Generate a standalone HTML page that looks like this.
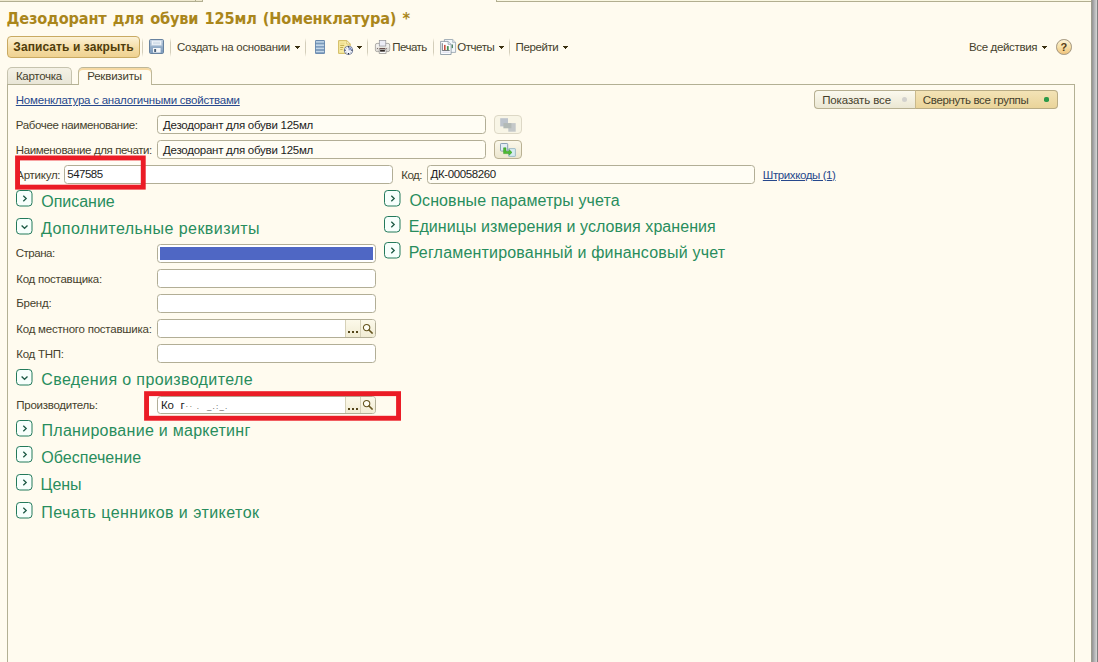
<!DOCTYPE html>
<html lang="ru">
<head>
<meta charset="utf-8">
<title>Дезодорант для обуви 125мл (Номенклатура)</title>
<style>
html,body{margin:0;padding:0;}
body{width:1098px;height:662px;overflow:hidden;position:relative;background:#fffbef;font-family:"Liberation Sans",sans-serif;font-size:11.5px;letter-spacing:-.26px;color:#453f2c;}
.a{position:absolute;white-space:nowrap;}
svg{position:absolute;overflow:visible;}
.t{position:absolute;white-space:nowrap;line-height:14px;height:14px;color:#453f2c;}
#title{letter-spacing:-.15px;word-spacing:1.3px;left:6.5px;top:9px;font-family:"DejaVu Sans Condensed","DejaVu Sans","Liberation Sans",sans-serif;font-weight:bold;font-size:16.15px;line-height:20px;color:#aa861b;}
.sep{position:absolute;width:1px;top:38px;height:19px;background:linear-gradient(rgba(190,184,160,0),rgba(196,190,168,.75) 25%,rgba(196,190,168,.75) 75%,rgba(190,184,160,0));}
.inp{position:absolute;box-sizing:border-box;height:18.5px;border:1px solid #b2ae96;border-radius:3.5px;background:#fff;line-height:16.5px;padding-left:5px;color:#1c1c1c;font-size:11.5px;white-space:nowrap;overflow:hidden;}
.inp.ro{background:#fffdf4;}
.gh{position:absolute;white-space:nowrap;font-size:16px;line-height:20px;color:#288d5d;}
.link{color:#27488c;text-decoration:underline;}
.btn{position:absolute;box-sizing:border-box;top:0;height:17px;background:linear-gradient(#fcf9ea,#f1ecd4);border-left:1px solid #d6d1b8;}
</style>
</head>
<body>

<!-- top strip -->
<div class="a" style="left:0;top:0;width:203px;height:1px;background:#efe9cf;"></div>
<div class="a" style="left:0;top:1px;width:203px;height:1px;background:#b2ae90;"></div>
<div class="a" style="left:195px;top:0;width:1px;height:2px;background:#b2ae90;"></div>
<div class="a" style="left:202px;top:0;width:1px;height:2px;background:#b2ae90;"></div>
<div class="a" style="left:496px;top:0;width:595px;height:1px;background:#faf7e2;"></div>
<div class="a" style="left:496px;top:1px;width:595px;height:1px;background:#b2ae90;"></div>
<div class="a" style="left:496px;top:0;width:1px;height:2px;background:#b2ae90;"></div>
<!-- right bar -->
<div class="a" style="left:1091px;top:0;width:7px;height:662px;background:linear-gradient(90deg,#9d9d8e 0px,#9d9d8e 1px,#999999 1px,#999999 2px,#a6a6a8 2px,#a6a6a8 3px,#b4b5b6 3px,#b4b5b6 4px,#c1c2c2 4px,#c1c2c2 5px,#d0d0d0 5px,#d0d0d0 6px,#808080 6px,#808080 7px);"></div>

<div id="title" class="a">Дезодорант для обуви 125мл (Номенклатура) *</div>

<!-- toolbar -->
<div class="a" style="left:7px;top:36px;width:133px;height:22px;box-sizing:border-box;border:1px solid #c9aa62;border-radius:4px;background:linear-gradient(#fcf2d6,#f5dda6 55%,#efd291);font-weight:bold;font-size:12px;line-height:20px;text-align:center;color:#4f3d0c;letter-spacing:.08px;">Записать и закрыть</div>
<div class="sep" style="left:142px;"></div>
<!-- save icon -->
<svg style="left:149px;top:39px;" width="15" height="15" viewBox="0 0 15 15">
<rect x=".5" y=".5" width="14" height="14" rx="1.2" fill="#98b0cb" stroke="#67829f"/>
<rect x="1" y="1" width="13" height="3.4" fill="#b3c5d9"/><rect x="1" y="4.4" width="13" height="3.2" fill="#a5bad1"/><rect x="1" y="10.8" width="13" height="3.2" fill="#829fbf"/><rect x="1" y="7.6" width="13" height="3.2" fill="#90aac6"/>
<rect x="2.6" y="1.4" width="9.8" height="4.8" fill="#eef3f8" stroke="#c3d1e0" stroke-width=".6"/>
<rect x="4" y="2.8" width="7" height=".8" fill="#c9d6e4"/><rect x="4" y="4.3" width="7" height=".8" fill="#c9d6e4"/>
<rect x="4" y="9" width="7.6" height="4.6" fill="#f4f6f8"/>
<rect x="5.2" y="10" width="1.9" height="3" fill="#4a5f78"/>
</svg>
<div class="sep" style="left:170px;"></div>
<div class="t" style="left:177px;top:40px;letter-spacing:-.32px;">Создать на основании</div>
<svg style="left:295px;top:46px;" width="5" height="3" shape-rendering="crispEdges"><path d="M0 0h5v1h-1v1h-1v1h-1v-1h-1v-1h-1z" fill="#3a3010"/></svg>
<div class="sep" style="left:305px;"></div>
<!-- list icon -->
<svg style="left:315px;top:40px;" width="10" height="14" viewBox="0 0 10 14">
<rect x="0" y="0" width="10" height="14" rx="1.2" fill="#6989ad"/>
<rect x=".9" y="1.1" width="8.2" height="1.7" fill="#c3d7e9"/><rect x=".9" y="4.3" width="8.2" height="1.7" fill="#c3d7e9"/><rect x=".9" y="7.5" width="8.2" height="1.7" fill="#c3d7e9"/><rect x=".9" y="10.7" width="8.2" height="1.7" fill="#c3d7e9"/>
<rect x=".9" y="2.8" width="8.2" height=".8" fill="#86a6c6"/><rect x=".9" y="6" width="8.2" height=".8" fill="#86a6c6"/><rect x=".9" y="9.2" width="8.2" height=".8" fill="#86a6c6"/><rect x=".9" y="12.4" width="8.2" height=".8" fill="#86a6c6"/>
</svg>
<!-- doc clock icon -->
<svg style="left:338px;top:40px;" width="16" height="16" viewBox="0 0 16 16">
<path d="M.6 .6 H8.8 L12.2 4 V13.4 H.6 Z" fill="#f8eba4" stroke="#cdb556" stroke-width=".9"/>
<path d="M8.8 .6 V4 H12.2 Z" fill="#fffbe2" stroke="#cdb556" stroke-width=".7"/>
<rect x="2.2" y="2.8" width="4.4" height=".7" fill="#e3cf7a"/><rect x="2.2" y="4.9" width="4" height=".9" fill="#b9a444"/><rect x="2.2" y="7" width="3" height=".9" fill="#b9a444"/><rect x="2.2" y="9.1" width="2.4" height=".9" fill="#c7b35a"/>
<circle cx="10.5" cy="10.3" r="4.1" fill="#f3f5fb" stroke="#7c88a6" stroke-width="1"/>
<path d="M10.5 10.3 V6.9 A3.4 3.4 0 0 1 13.9 10.3 Z" fill="#93a3d2"/>
<path d="M10.5 6.2 V7.6 M10.5 13 V14.4 M6.4 10.3 H7.8 M13.2 10.3 H14.6" stroke="#23283c" stroke-width="1.1"/>
<path d="M7.7 7.5 L8.3 8.1 M13.3 7.5 L12.7 8.1 M7.7 13.1 L8.3 12.5 M13.3 13.1 L12.7 12.5" stroke="#3a4260" stroke-width=".9"/>
</svg>
<svg style="left:357px;top:46px;" width="5" height="3" shape-rendering="crispEdges"><path d="M0 0h5v1h-1v1h-1v1h-1v-1h-1v-1h-1z" fill="#3a3010"/></svg>
<div class="sep" style="left:367px;"></div>
<!-- printer -->
<svg style="left:375px;top:40px;" width="15" height="14" viewBox="0 0 15 14">
<rect x=".4" y="3.4" width="14.3" height="8.2" rx="1.7" fill="#f2f0ed" stroke="#9b9995" stroke-width=".8"/>
<rect x="1" y="7.6" width="13.1" height="3.5" rx="1" fill="#dedbd6"/>
<rect x="4.3" y=".35" width="6.5" height="5.7" fill="#ececf5" stroke="#929297" stroke-width=".7"/>
<rect x="2" y="8" width=".8" height=".9" fill="#5c4444"/><rect x="4.4" y="8" width="5.8" height=".9" fill="#5a3e3c"/><rect x="10.8" y="8" width=".8" height=".9" fill="#5c4444"/>
<rect x="4.2" y="9.7" width="6.8" height="3.9" fill="#fcfcfc" stroke="#8c8a87" stroke-width=".7"/>
<rect x="5.1" y="10.1" width="4.8" height="1.5" fill="#1b1311"/>
</svg>
<div class="t" style="left:392.3px;top:40px;letter-spacing:-0.530px;">Печать</div>
<div class="sep" style="left:433px;"></div>
<!-- reports -->
<svg style="left:440px;top:39px;" width="16" height="16" viewBox="0 0 16 16">
<path d="M4.4 .5 H12.7 L15.6 3.4 V13.4 H4.4 Z" fill="#f3f7fa" stroke="#919ea9" stroke-width=".8"/>
<path d="M12.7 .5 V3.4 H15.6" fill="#dfe6ec" stroke="#919ea9" stroke-width=".6"/>
<rect x="11.6" y="5.5" width="1.3" height="3.6" fill="#3f7a55"/>
<path d="M.6 2.4 H8.1 L11.1 5.4 V15.5 H.6 Z" fill="#fcfdfe" stroke="#80909d" stroke-width=".8"/>
<path d="M8.1 2.4 V5.4 H11.1" fill="#e4eaef" stroke="#80909d" stroke-width=".6"/>
<path d="M2.3 4.2 V11.5 H9.7" fill="none" stroke="#55595e" stroke-width=".8"/>
<rect x="4" y="5.9" width="1.6" height="5.2" fill="#c9503f"/><rect x="6.9" y="7.1" width="1.8" height="4" fill="#4a8f50"/>
<rect x="2.3" y="12.8" width="7.4" height=".6" fill="#bdbfe0"/>
</svg>
<div class="t" style="left:457.2px;top:40px;letter-spacing:-0.430px;">Отчеты</div>
<svg style="left:499px;top:46px;" width="5" height="3" shape-rendering="crispEdges"><path d="M0 0h5v1h-1v1h-1v1h-1v-1h-1v-1h-1z" fill="#3a3010"/></svg>
<div class="sep" style="left:509px;"></div>
<div class="t" style="left:515.6px;top:40px;letter-spacing:-0.410px;">Перейти</div>
<svg style="left:563px;top:46px;" width="5" height="3" shape-rendering="crispEdges"><path d="M0 0h5v1h-1v1h-1v1h-1v-1h-1v-1h-1z" fill="#3a3010"/></svg>
<div class="t" style="left:968.9px;top:40px;letter-spacing:-0.340px;">Все действия</div>
<svg style="left:1042px;top:46px;" width="5" height="3" shape-rendering="crispEdges"><path d="M0 0h5v1h-1v1h-1v1h-1v-1h-1v-1h-1z" fill="#3a3010"/></svg>
<!-- help -->
<div class="a" style="left:1056.1px;top:39.1px;width:15.7px;height:15.7px;box-sizing:border-box;border:1px solid #a3957c;border-radius:50%;background:linear-gradient(#fcf3d6 0,#f7e2ab 45%,#f1c47e 100%);text-align:center;font-weight:bold;font-size:11px;letter-spacing:0;line-height:15px;color:#553d16;">?</div>

<!-- tabs + panel -->
<div class="a" style="left:7px;top:84px;width:1068px;height:600px;box-sizing:border-box;border:1px solid #b3b094;"></div>
<div class="a" style="left:7px;top:67px;width:65px;height:17px;box-sizing:border-box;border:1px solid #c6c3ae;border-bottom:none;border-radius:5px 5px 0 0;background:linear-gradient(#f4f1e5,#e9e6d7);line-height:16px;padding-left:7.9px;">Карточка</div>
<div class="a" style="left:77.6px;top:66.6px;width:74.8px;height:18.4px;box-sizing:border-box;border:1px solid #bdb798;border-bottom:none;border-radius:5px 5px 0 0;background:#fffbef;box-shadow:inset 0 2px 0 #f6d9a2;line-height:17.6px;padding-left:8.6px;letter-spacing:-0.190px;">Реквизиты</div>

<div class="t link" style="left:15.8px;top:93px;letter-spacing:-.23px;">Номенклатура с аналогичными свойствами</div>

<!-- toggle -->
<div class="a" style="left:814.4px;top:90px;width:101.6px;height:18.8px;box-sizing:border-box;border:1px solid #b7b092;border-right:none;border-radius:4px 0 0 4px;background:linear-gradient(#fbf9ee,#ebe7d3);line-height:18.4px;padding-left:6.8px;letter-spacing:-.12px;">Показать все</div>
<div class="a" style="left:915.4px;top:90px;width:142.2px;height:18.8px;box-sizing:border-box;border:1px solid #b9ac84;border-left:1px solid #c9b98c;border-radius:0 4px 4px 0;background:linear-gradient(#f3e3b6,#ead49a);line-height:18.4px;padding-left:6.4px;letter-spacing:-.33px;">Свернуть все группы</div>
<div class="a" style="left:902px;top:96.9px;width:5px;height:5px;border-radius:50%;background:#d2d1cd;"></div>
<div class="a" style="left:1044px;top:96.9px;width:5px;height:5px;border-radius:1.8px;background:#2c9a48;"></div>

<!-- rows -->
<div class="t" style="left:15.8px;top:117.5px;letter-spacing:-0.360px;">Рабочее наименование:</div>
<div class="inp ro" style="left:157px;top:115.2px;width:329px;line-height:18px;">Дезодорант для обуви 125мл</div>
<div class="t" style="left:15.8px;top:142.5px;letter-spacing:-0.370px;">Наименование для печати:</div>
<div class="inp ro" style="left:157px;top:140.2px;width:329px;line-height:18px;">Дезодорант для обуви 125мл</div>

<!-- name buttons -->
<div class="a" style="left:494.3px;top:115.2px;width:27.5px;height:18.5px;box-sizing:border-box;border:1px solid #ddd8c6;border-radius:4px;background:#f8f5e6;"></div>
<svg style="left:500px;top:118px;" width="16" height="14" viewBox="0 0 16 14">
<rect x=".2" y=".2" width="7.8" height="8.2" fill="#bdc4cc"/><rect x="8.3" y="5.1" width="7.4" height="8.6" fill="#c4c8c9"/><rect x="3.4" y="5.1" width="8" height="5.2" fill="#b3bab6"/>
</svg>
<div class="a" style="left:494.3px;top:140.2px;width:27.5px;height:18.5px;box-sizing:border-box;border:1px solid #b9b193;border-radius:4px;background:linear-gradient(#fbf8ea,#ece6cf);"></div>
<svg style="left:500px;top:143px;" width="16" height="14" viewBox="0 0 16 14">
<rect x=".5" y=".5" width="7.2" height="7.6" rx=".8" fill="#e3edf3" stroke="#7e98ae" stroke-width=".9"/>
<rect x="8.6" y="5.6" width="6.8" height="7.8" rx=".5" fill="#d6ecf0" stroke="#8fb0bf" stroke-width=".8"/>
<path d="M3.6 4.8 H6 V8.4 H9.2 V6.6 L12 9.4 L9.2 12.2 V10.6 H3.6 Z" fill="#4dbb33" stroke="#2f971f" stroke-width=".5"/>
</svg>

<div class="a" style="left:16px;top:156px;width:129px;height:33px;background:#fffdf6;"></div>
<div class="t" style="left:16.3px;top:167.5px;">Артикул:</div>
<div class="inp" style="left:64px;top:165.3px;width:329px;padding-left:2.3px;letter-spacing:-.52px;">547585</div>
<svg style="left:0;top:0;" width="420" height="430"><rect x="17.55" y="157.95" width="125.7" height="29.2" fill="none" stroke="#eb1c26" stroke-width="4.9"/></svg>
<div class="t" style="left:401.2px;top:167.5px;letter-spacing:-0.460px;">Код:</div>
<div class="inp ro" style="left:427px;top:165.3px;width:328px;padding-left:2.5px;letter-spacing:-.38px;">ДК-00058260</div>
<div class="t link" style="left:762.8px;top:167.5px;letter-spacing:-0.400px;">Штрихкоды (1)</div>

<!-- groups left -->
<svg style="left:16px;top:190px;" width="17" height="17"><rect x=".5" y=".5" width="15.5" height="15.5" rx="3.3" fill="#f7fffc" stroke="#237a5b" stroke-width="1"/><path d="M7.3 5.7 L10.2 8.5 L7.3 11.3" fill="none" stroke="#1d5a45" stroke-width="1.3"/></svg><div class="gh" style="left:41.3px;top:191.6px;letter-spacing:-0.030px;">Описание</div>
<svg style="left:16px;top:218px;" width="17" height="17"><rect x=".5" y=".5" width="15.5" height="15.5" rx="3.3" fill="#f7fffc" stroke="#237a5b" stroke-width="1"/><path d="M5.6 7.5 L8.55 10.3 L11.5 7.5" fill="none" stroke="#1d5a45" stroke-width="1.3"/></svg><div class="gh" style="left:41.0px;top:218.8px;letter-spacing:0.440px;">Дополнительные реквизиты</div>

<div class="t" style="left:15.7px;top:246px;letter-spacing:-.46px;">Страна:</div>
<div class="inp" style="left:157px;top:244.3px;width:219px;"></div>
<div class="a" style="left:160.3px;top:247.4px;width:212.6px;height:12.2px;background:#4f67c4;"></div>
<div class="t" style="left:16.3px;top:271.7px;">Код поставщика:</div>
<div class="inp" style="left:157px;top:269.2px;width:219px;"></div>
<div class="t" style="left:16.3px;top:296px;">Бренд:</div>
<div class="inp" style="left:157px;top:294.4px;width:219px;"></div>
<div class="t" style="left:16.3px;top:321.7px;letter-spacing:-0.230px;">Код местного поставшика:</div>
<div class="inp" style="left:157px;top:319.3px;width:219px;"><div class="btn" style="left:187px;width:15px;"></div><div class="btn" style="left:202px;width:16px;"></div></div>
<div class="a" style="left:348px;top:331.3px;width:1.7px;height:2.2px;background:#54461a;box-shadow:4px 0 0 #54461a,8px 0 0 #54461a;"></div>
<svg style="left:362.3px;top:322.5px;" width="12" height="12"><circle cx="4.6" cy="4.6" r="3.2" fill="#fffef4" stroke="#65551f" stroke-width="1.05"/><path d="M7 7 L10.2 10.1" stroke="#65551f" stroke-width="1.5" stroke-linecap="round"/></svg>
<div class="t" style="left:16.3px;top:346.5px;">Код ТНП:</div>
<div class="inp" style="left:157px;top:344.2px;width:219px;"></div>

<svg style="left:16px;top:369px;" width="17" height="17"><rect x=".5" y=".5" width="15.5" height="15.5" rx="3.3" fill="#f7fffc" stroke="#237a5b" stroke-width="1"/><path d="M5.6 7.5 L8.55 10.3 L11.5 7.5" fill="none" stroke="#1d5a45" stroke-width="1.3"/></svg><div class="gh" style="left:41.3px;top:369.8px;letter-spacing:0.380px;">Сведения о производителе</div>
<div class="a" style="left:146px;top:393px;width:12px;height:26px;background:#fffef9;"></div>
<div class="t" style="left:16.3px;top:397.5px;">Производитель:</div>
<div class="inp" style="left:157px;top:395.6px;width:219px;padding-left:3px;">Ко<span style="margin-left:7px;color:#222;">г</span><span style="font-size:8px;color:#444;letter-spacing:1.2px;margin-left:1px;">·· . &nbsp;_.:_.</span><div class="btn" style="left:187px;width:15px;"></div><div class="btn" style="left:202px;width:16px;"></div></div>
<div class="a" style="left:348px;top:407.8px;width:1.7px;height:2.2px;background:#54461a;box-shadow:4px 0 0 #54461a,8px 0 0 #54461a;"></div>
<svg style="left:362.3px;top:398.8px;" width="12" height="12"><circle cx="4.6" cy="4.6" r="3.2" fill="#fffef4" stroke="#65551f" stroke-width="1.05"/><path d="M7 7 L10.2 10.1" stroke="#65551f" stroke-width="1.5" stroke-linecap="round"/></svg>
<svg style="left:0;top:0;" width="420" height="430"><rect x="146.55" y="393.65" width="252" height="24.6" fill="none" stroke="#eb1c26" stroke-width="4.9"/></svg>

<svg style="left:16px;top:420px;" width="17" height="17"><rect x=".5" y=".5" width="15.5" height="15.5" rx="3.3" fill="#f7fffc" stroke="#237a5b" stroke-width="1"/><path d="M7.3 5.7 L10.2 8.5 L7.3 11.3" fill="none" stroke="#1d5a45" stroke-width="1.3"/></svg><div class="gh" style="left:41.5px;top:420.9px;letter-spacing:0.280px;">Планирование и маркетинг</div>
<svg style="left:16px;top:446px;" width="17" height="17"><rect x=".5" y=".5" width="15.5" height="15.5" rx="3.3" fill="#f7fffc" stroke="#237a5b" stroke-width="1"/><path d="M7.3 5.7 L10.2 8.5 L7.3 11.3" fill="none" stroke="#1d5a45" stroke-width="1.3"/></svg><div class="gh" style="left:41.3px;top:447.6px;letter-spacing:0.050px;">Обеспечение</div>
<svg style="left:16px;top:474px;" width="17" height="17"><rect x=".5" y=".5" width="15.5" height="15.5" rx="3.3" fill="#f7fffc" stroke="#237a5b" stroke-width="1"/><path d="M7.3 5.7 L10.2 8.5 L7.3 11.3" fill="none" stroke="#1d5a45" stroke-width="1.3"/></svg><div class="gh" style="left:40.6px;top:475.1px;letter-spacing:-0.020px;">Цены</div>
<svg style="left:16px;top:502px;" width="17" height="17"><rect x=".5" y=".5" width="15.5" height="15.5" rx="3.3" fill="#f7fffc" stroke="#237a5b" stroke-width="1"/><path d="M7.3 5.7 L10.2 8.5 L7.3 11.3" fill="none" stroke="#1d5a45" stroke-width="1.3"/></svg><div class="gh" style="left:41.3px;top:502.9px;letter-spacing:0.450px;">Печать ценников и этикеток</div>

<!-- groups right -->
<svg style="left:384px;top:190px;" width="17" height="17"><rect x=".5" y=".5" width="15.5" height="15.5" rx="3.3" fill="#f7fffc" stroke="#237a5b" stroke-width="1"/><path d="M7.3 5.7 L10.2 8.5 L7.3 11.3" fill="none" stroke="#1d5a45" stroke-width="1.3"/></svg><div class="gh" style="left:409.5px;top:190.9px;letter-spacing:0.090px;">Основные параметры учета</div>
<svg style="left:384px;top:216px;" width="17" height="17"><rect x=".5" y=".5" width="15.5" height="15.5" rx="3.3" fill="#f7fffc" stroke="#237a5b" stroke-width="1"/><path d="M7.3 5.7 L10.2 8.5 L7.3 11.3" fill="none" stroke="#1d5a45" stroke-width="1.3"/></svg><div class="gh" style="left:408.7px;top:216.9px;letter-spacing:0.064px;">Единицы измерения и условия хранения</div>
<svg style="left:384px;top:242px;" width="17" height="17"><rect x=".5" y=".5" width="15.5" height="15.5" rx="3.3" fill="#f7fffc" stroke="#237a5b" stroke-width="1"/><path d="M7.3 5.7 L10.2 8.5 L7.3 11.3" fill="none" stroke="#1d5a45" stroke-width="1.3"/></svg><div class="gh" style="left:408.7px;top:242.9px;letter-spacing:0.190px;">Регламентированный и финансовый учет</div>
</body>
</html>
